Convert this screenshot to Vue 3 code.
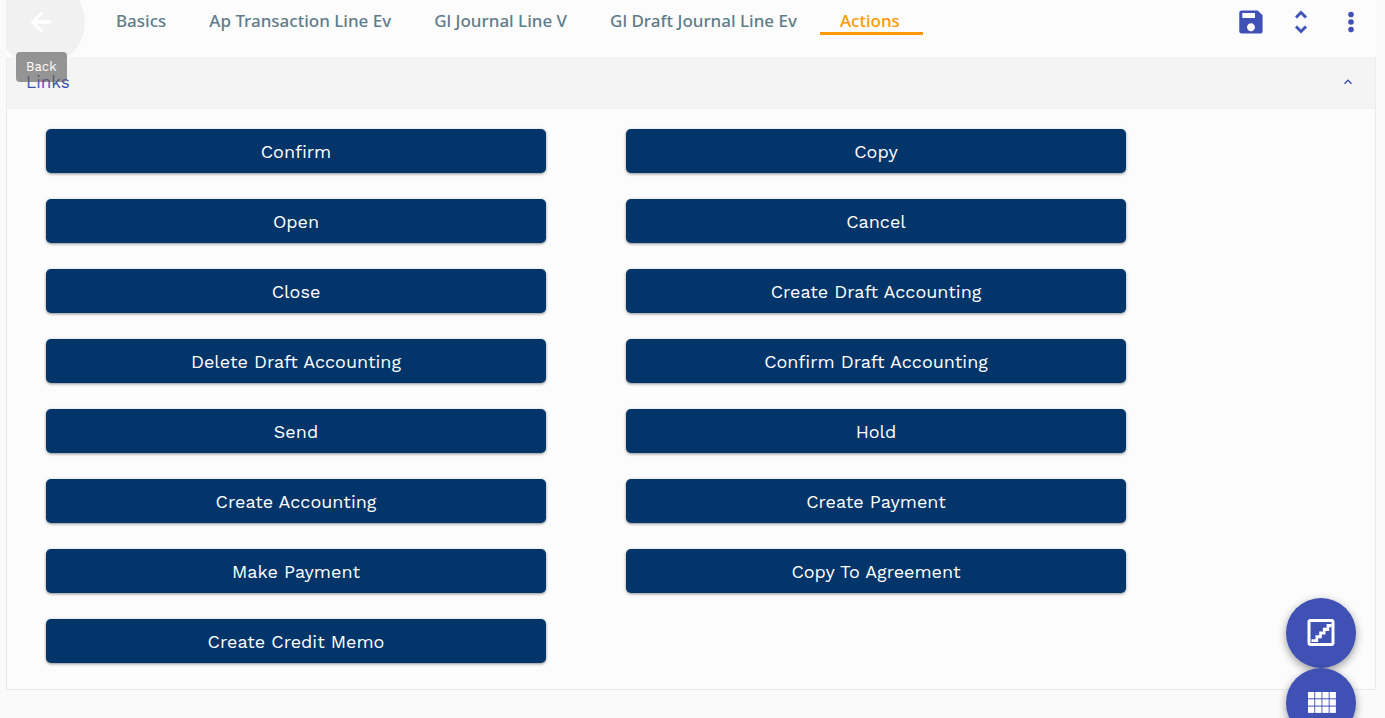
<script setup>
import { ref } from 'vue'

const tabs = ['Basics', 'Ap Transaction Line Ev', 'Gl Journal Line V', 'Gl Draft Journal Line Ev', 'Actions']
const active = ref('Actions')
const open = ref(true)
const actions = [
  'Confirm', 'Copy',
  'Open', 'Cancel',
  'Close', 'Create Draft Accounting',
  'Delete Draft Accounting', 'Confirm Draft Accounting',
  'Send', 'Hold',
  'Create Accounting', 'Create Payment',
  'Make Payment', 'Copy To Agreement',
  'Create Credit Memo',
]
</script>

<template>
  <div class="page">
    <header class="toolbar">
      <button class="back" aria-label="Back" aria-describedby="back-tip">
        <svg width="30" height="30" viewBox="0 0 24 24"><path fill="#fff" stroke="#fff" stroke-width=".8" d="M20 11H7.83l5.59-5.59L12 4l-8 8 8 8 1.41-1.41L7.83 13H20v-2z" /></svg>
      </button>
      <nav class="tabs">
        <button v-for="tab in tabs" :key="tab" class="tab" :class="{ active: tab === active }" @click="active = tab">{{ tab }}</button>
      </nav>
      <div class="tools">
        <button class="tool" aria-label="Save">
          <svg width="32" height="32" viewBox="0 0 24 24"><path fill="currentColor" d="M17 3.300H5a1.800 1.800 0 0 0-1.800 1.800v13.800a1.800 1.800 0 0 0 1.800 1.800h14c1 0 1.700-.8 1.700-1.800V7zm-5 15.700c-1.660 0-3-1.340-3-3s1.340-3 3-3 3 1.340 3 3-1.340 3-3 3zm3-10H5.500V5.300H15z" /></svg>
        </button>
        <button class="tool" aria-label="Expand or collapse">
          <svg width="30" height="30" viewBox="0 0 24 24"><path fill="currentColor" stroke="currentColor" stroke-width=".5" d="M12 5.830 15.170 9l1.410-1.410L12 3 7.410 7.590 8.830 9 12 5.830zm0 12.340L8.830 15l-1.410 1.410L12 21l4.590-4.590L15.170 15 12 18.170z" /></svg>
        </button>
        <button class="tool" aria-label="More">
          <svg width="32" height="32" viewBox="0 0 24 24"><g fill="currentColor"><circle cx="12" cy="6.400" r="2.100" /><circle cx="12" cy="12" r="2.100" /><circle cx="12" cy="17.600" r="2.100" /></g></svg>
        </button>
      </div>
    </header>

    <section class="panel">
      <button class="panel-head" :aria-expanded="open" @click="open = !open">
        <span>Links</span>
        <svg width="10" height="10" viewBox="0 0 10 10"><path d="M1.500 6.800 5 3.300l3.500 3.500" fill="none" stroke="currentColor" stroke-width="1.400" /></svg>
      </button>
      <div v-if="open" class="actions">
        <button v-for="action in actions" :key="action" class="action">{{ action }}</button>
      </div>
    </section>

    <div id="back-tip" class="tooltip" role="tooltip">Back</div>

    <div class="fabs">
      <button class="fab" aria-label="Steps">
        <svg width="28" height="28" viewBox="0 0 28 28"><rect x="2" y="1.500" width="24" height="24" rx="1.500" fill="none" stroke="currentColor" stroke-width="3" /><path fill="currentColor" d="M4.500 20.200h4v-4h3.700v-3.700h3.700V8.800h3.700V5h5v3.200h-2.400v3.700h-3.700v3.700h-3.700v3.700h-3.600V23H4.500z" /></svg>
      </button>
      <button class="fab" aria-label="Grid view">
        <svg width="30" height="22" viewBox="0 0 30 22"><g fill="currentColor"><template v-for="r in 3" :key="r"><rect v-for="c in 4" :key="c" :x="(c - 1) * 7.200 + 2" :y="(r - 1) * 7.300" width="6.300" height="6.300" /></template></g></svg>
      </button>
    </div>
  </div>
</template>

<style>
body {
  background: #fafafa;
}
</style>

<style scoped>
.page {
  padding: 0 9px 28px 6px;
  font-family: "Work Sans", Inter, "Liberation Sans", sans-serif;
}
button {
  margin: 0;
  padding: 0;
  border: 0;
  background: none;
  font: inherit;
  cursor: pointer;
}
svg {
  display: block;
}
.toolbar {
  display: flex;
  align-items: flex-start;
  height: 57px;
  overflow: hidden;
  background: #fcfcfc;
}
.back {
  display: grid;
  place-items: center;
  flex: none;
  width: 88px;
  height: 88px;
  margin: -22px 11px 0 -9px;
  border-radius: 50%;
  background: #f1f1f1;
}
.tabs {
  display: flex;
}
.tab {
  height: 35px;
  padding: 10px 23px 0 20px;
  border-bottom: 3px solid transparent;
  color: #607d8b;
  font: 500 17px/22px "Segoe UI", "Noto Sans", "Open Sans", sans-serif;
  white-space: nowrap;
}
.tab.active {
  border-color: #ff9800;
  color: #ff9800;
}
.tools {
  display: flex;
  margin-left: auto;
  color: #3f51b5;
}
.tool {
  display: grid;
  place-items: center;
  width: 50px;
  height: 44px;
  color: inherit;
}
.panel {
  border: 1px solid #ebebeb;
  border-top: 0;
  background: #fcfcfc;
}
.panel-head {
  display: flex;
  align-items: center;
  justify-content: space-between;
  width: 100%;
  height: 52px;
  padding: 0 22px 2px 19px;
  background: #f4f4f4;
  color: #3f51b5;
  font-size: 17px;
  line-height: 24px;
}
.actions {
  display: grid;
  grid-template-columns: repeat(2, minmax(0, 500px));
  gap: 26px 80px;
  padding: 20px 39px 26px;
}
.action {
  height: 44px;
  padding-top: 2px;
  border-radius: 5px;
  background: #03356b;
  box-shadow: 0 1px 3px rgba(0, 0, 0, 0.45);
  color: #fff;
  font-size: 18px;
  line-height: 24px;
}
.tooltip {
  position: absolute;
  top: 52px;
  left: 16px;
  padding: 5px 10px;
  border-radius: 4px;
  background: rgba(97, 97, 97, 0.65);
  color: #fff;
  font-size: 13px;
  line-height: 20px;
}
.fabs {
  position: fixed;
  top: 598px;
  right: 29px;
}
.fab {
  display: grid;
  place-items: center;
  width: 70px;
  height: 70px;
  border-radius: 50%;
  background: #3f51b5;
  box-shadow: 0 3px 8px rgba(0, 0, 0, 0.4);
  color: #fff;
}
</style>
